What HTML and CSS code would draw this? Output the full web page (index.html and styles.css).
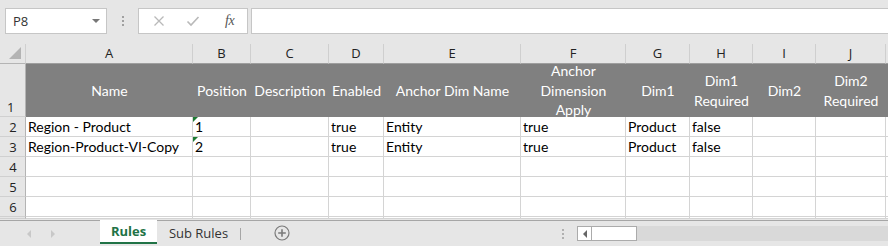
FILE: index.html
```html
<!DOCTYPE html>
<html>
<head>
<meta charset="utf-8">
<link rel="stylesheet" href="styles.css">
</head>
<body>
<div class="app">
  <div class="fbar">
    <div class="namebox"><span class="ref">P8</span><span class="dd"></span></div>
    <div class="vdots"><i></i><i></i><i></i></div>
    <div class="fbtns">
      <svg class="ico" width="12" height="12" viewBox="0 0 12 12"><path d="M1.5 1.5L10.5 10.5M10.5 1.5L1.5 10.5" stroke="#b9b9b9" stroke-width="1.3" fill="none"/></svg>
      <svg class="ico" width="14" height="12" viewBox="0 0 14 12"><path d="M1.5 6.5L5 10L12.5 2" stroke="#b9b9b9" stroke-width="1.6" fill="none"/></svg>
      <span class="fx">fx</span>
    </div>
    <div class="finput"></div>
  </div>

  <div class="sheet">
    <div class="corner"><span class="tri"></span></div>
    <div class="ch">A</div><div class="ch">B</div><div class="ch">C</div><div class="ch">D</div><div class="ch">E</div><div class="ch">F</div><div class="ch">G</div><div class="ch">H</div><div class="ch">I</div><div class="ch">J</div><div class="ch last"></div>

    <div class="rh rh1">1</div>
    <div class="hc">Name</div><div class="hc">Position</div><div class="hc">Description</div><div class="hc">Enabled</div><div class="hc">Anchor Dim Name</div><div class="hc">Anchor Dimension Apply</div><div class="hc">Dim1</div><div class="hc">Dim1 Required</div><div class="hc">Dim2</div><div class="hc">Dim2 Required</div><div class="hc"></div>

    <div class="rh">2</div>
    <div class="c">Region - Product</div><div class="c flag">1</div><div class="c"></div><div class="c">true</div><div class="c">Entity</div><div class="c">true</div><div class="c">Product</div><div class="c">false</div><div class="c"></div><div class="c"></div><div class="c"></div>

    <div class="rh">3</div>
    <div class="c">Region-Product-VI-Copy</div><div class="c flag">2</div><div class="c"></div><div class="c">true</div><div class="c">Entity</div><div class="c">true</div><div class="c">Product</div><div class="c">false</div><div class="c"></div><div class="c"></div><div class="c"></div>

    <div class="rh">4</div>
    <div class="c"></div><div class="c"></div><div class="c"></div><div class="c"></div><div class="c"></div><div class="c"></div><div class="c"></div><div class="c"></div><div class="c"></div><div class="c"></div><div class="c"></div>

    <div class="rh">5</div>
    <div class="c"></div><div class="c"></div><div class="c"></div><div class="c"></div><div class="c"></div><div class="c"></div><div class="c"></div><div class="c"></div><div class="c"></div><div class="c"></div><div class="c"></div>

    <div class="rh">6</div>
    <div class="c"></div><div class="c"></div><div class="c"></div><div class="c"></div><div class="c"></div><div class="c"></div><div class="c"></div><div class="c"></div><div class="c"></div><div class="c"></div><div class="c"></div>

    <div class="rh"></div>
    <div class="c"></div><div class="c"></div><div class="c"></div><div class="c"></div><div class="c"></div><div class="c"></div><div class="c"></div><div class="c"></div><div class="c"></div><div class="c"></div><div class="c"></div>
  </div>

  <div class="tabbar">
    <div class="nav"><span class="arr l"></span><span class="arr r"></span></div>
    <div class="tab active">Rules</div>
    <div class="tab">Sub Rules</div>
    <div class="tabsep"></div>
    <div class="add">
      <svg width="16" height="16" viewBox="0 0 16 16"><circle cx="8" cy="8" r="7" stroke="#7a7a7a" stroke-width="1.2" fill="none"/><path d="M8 4.2V11.8M4.2 8H11.8" stroke="#7a7a7a" stroke-width="1.6"/></svg>
    </div>
    <div class="spacer"></div>
    <div class="vdots small"><i></i><i></i><i></i></div>
    <div class="hscroll">
      <div class="sbtn"><span class="larr"></span></div>
      <div class="thumb"></div>
      <div class="track"></div>
    </div>
  </div>
</div>
</body>
</html>
```

FILE: styles.css
```css
* { box-sizing: border-box; }
html, body { margin: 0; padding: 0; }
body {
  width: 888px;
  height: 246px;
  overflow: hidden;
  background: #e6e6e6;
  font-family: "Liberation Sans", Arial, sans-serif;
}
.app { display: flex; flex-direction: column; height: 246px; }

/* formula bar */
.fbar {
  height: 44px;
  display: flex;
  align-items: flex-start;
  padding: 8px 0 0 5px;
  background: #e6e6e6;
}
.namebox {
  width: 102px;
  height: 26px;
  background: #fff;
  border: 1px solid #c6c6c6;
  display: flex;
  align-items: center;
  justify-content: space-between;
  padding: 0 6px 0 7px;
}
.ref { font-family: "Open Sans", sans-serif; font-size: 13px; color: #333; }
.dd {
  width: 0; height: 0;
  border-left: 4px solid transparent;
  border-right: 4px solid transparent;
  border-top: 4px solid #777;
}
.vdots {
  width: 31px;
  height: 26px;
  display: flex;
  flex-direction: column;
  align-items: center;
  justify-content: center;
  gap: 2px;
}
.vdots i { display: block; width: 2px; height: 2px; background: #a0a0a0; }
.fbtns {
  width: 110px;
  height: 26px;
  background: #fff;
  border: 1px solid #c6c6c6;
  display: flex;
  align-items: center;
  padding-left: 14px;
}
.fbtns .ico:nth-child(1) { margin-right: 21px; }
.fbtns .ico:nth-child(2) { margin-right: 25px; }
.fx {
  font-family: "Liberation Serif", serif;
  font-style: italic;
  font-size: 14px;
  color: #555;
  letter-spacing: -0.5px;
}
.finput {
  margin-left: 3px;
  flex: 1;
  height: 26px;
  background: #fff;
  border: 1px solid #c6c6c6;
  border-right: none;
}

/* grid */
.sheet {
  display: grid;
  grid-template-columns: 26px 167px 58px 78px 55px 137px 105px 64px 63px 63px 70px 1fr;
  grid-template-rows: 20px 53px 20px 20px 20px 20px 20px 2px;
  background: #fff;
  font-family: "Lato", "Liberation Sans", sans-serif;
}
.corner {
  background: #e6e6e6;
  border-right: 1px solid #d0d0d0;
  border-bottom: 1px solid #b4b4b4;
  position: relative;
}
.tri {
  position: absolute;
  right: 4px;
  bottom: 4px;
  width: 0; height: 0;
  border-left: 12px solid transparent;
  border-bottom: 12px solid #b3b3b3;
}
.ch {
  background: #e6e6e6;
  border-right: 1px solid #cfcfcf;
  border-bottom: 1px solid #9e9e9e;
  font-family: "Open Sans", sans-serif;
  font-size: 13px;
  color: #222;
  display: flex;
  align-items: center;
  justify-content: center;
  padding-bottom: 1px;
}
.ch.last { border-right: none; }
.rh {
  background: #e6e6e6;
  border-right: 1px solid #b4b4b4;
  border-bottom: 1px solid #d0d0d0;
  font-family: "Open Sans", sans-serif;
  font-size: 13px;
  color: #222;
  display: flex;
  align-items: center;
  justify-content: center;
  padding-left: 1px;
}
.rh1 { align-items: flex-end; padding-bottom: 0px; padding-left: 0; justify-content: flex-start; padding-left: 7px; }
.hc {
  background: #808080;
  color: #fff;
  font-size: 14px;
  line-height: 19.5px;
  text-align: center;
  display: flex;
  align-items: center;
  justify-content: center;
  overflow: hidden;
  padding: 0 1px;
}
.c {
  border-right: 1px solid #d4d4d4;
  border-bottom: 1px solid #d4d4d4;
  font-size: 14px;
  color: #000;
  padding: 0 2px;
  display: flex;
  align-items: center;
  white-space: nowrap;
  overflow: hidden;
  position: relative;
}
.flag::before {
  content: "";
  position: absolute;
  left: 0; top: 0;
  width: 0; height: 0;
  border-top: 5px solid #1e7b34;
  border-right: 5px solid transparent;
}

/* tab bar */
.tabbar {
  flex: 1;
  display: flex;
  align-items: stretch;
  border-top: 1px solid #a6a6a6;
  background: #e6e6e6;
  margin-top: 1px;
}
.nav {
  width: 100px;
  display: flex;
  align-items: center;
  padding-left: 27px;
  gap: 20px;
}
.arr { width: 0; height: 0; border-top: 4px solid transparent; border-bottom: 4px solid transparent; }
.arr.l { border-right: 4px solid #c8c8c8; }
.arr.r { border-left: 4px solid #c8c8c8; }
.tab {
  font-family: "Open Sans", sans-serif;
  font-size: 13px;
  color: #333;
  display: flex;
  align-items: center;
  justify-content: center;
  padding-bottom: 1px;
}
.tab.active {
  width: 57px;
  margin-top: -1px;
  background: #fff;
  color: #217346;
  font-weight: bold;
  border-bottom: 2px solid #217346;
  margin-bottom: 2px;
}
.tab:not(.active) { width: 83px; }
.tabsep { width: 1px; background: #a6a6a6; margin: 7px 0 6px; }
.add { width: 82px; display: flex; align-items: center; justify-content: center; padding-bottom: 1px; }
.spacer { width: 238px; }
.vdots.small { width: 4px; height: auto; align-self: center; }
.vdots.small i { background: #b0b0b0; }
.hscroll {
  flex: 1;
  display: flex;
  align-items: center;
  margin-left: 12px;
}
.sbtn {
  width: 15px;
  height: 15px;
  background: #fff;
  border: 1px solid #ababab;
  display: flex;
  align-items: center;
  justify-content: center;
}
.larr { width: 0; height: 0; border-top: 4px solid transparent; border-bottom: 4px solid transparent; border-right: 4px solid #666; }
.thumb {
  width: 45px;
  height: 15px;
  background: #fff;
  border: 1px solid #ababab;
  border-left: none;
}
.track { flex: 1; height: 15px; background: #d9d9d9; }
```
